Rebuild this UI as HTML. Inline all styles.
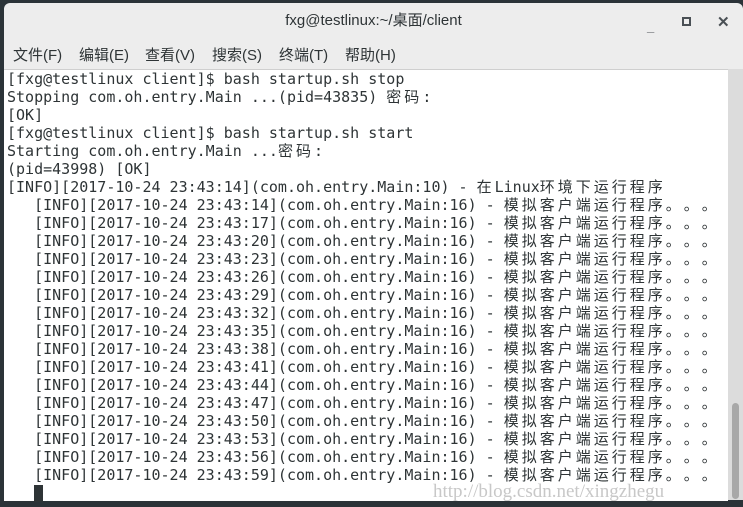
<!DOCTYPE html><html><head><meta charset="utf-8"><style>
body{margin:0;width:743px;height:507px;background:#2b3338;overflow:hidden;position:relative;font-family:"Liberation Sans","Noto Sans CJK SC",sans-serif}
.win{position:absolute;left:4px;top:3px;width:739px;height:497px;background:#ededed;border-radius:6px 6px 0 0}
.title{position:absolute;top:0;left:0;right:0;height:38px;text-align:center;line-height:36px;font-size:15px;color:#2e3436}
.menu{position:absolute;top:38px;left:9px;height:30px;line-height:30px;font-size:15px;color:#2e3436}
.menu span{display:inline-block;margin-right:0}
.term{position:absolute;left:0;top:66px;width:724px;height:431px;background:#fff;border-top:1px solid #cfcfcf}
.sb{position:absolute;left:724px;top:66px;width:15px;height:431px;background:#dcdcdc}
.thumb{position:absolute;left:728px;top:400px;width:7px;height:96px;background:#a8a8a8;border-radius:4px}
pre{margin:0;position:absolute;left:3px;top:0px;font-family:"DejaVu Sans Mono","Liberation Mono",monospace;font-size:15px;line-height:18px;color:#2e3436}
.c{font-family:"Noto Sans CJK SC",sans-serif;letter-spacing:3px}
.c b{display:inline-block;width:18px;font-weight:normal;letter-spacing:0}
.cur{display:inline-block;width:9px;height:17px;background:#2e3436;vertical-align:-4px}
.wm{position:absolute;left:429px;top:478px;font-family:"Liberation Serif",serif;font-size:19px;color:#c8c8c8}
.btn{position:absolute;top:13px;color:#4a5055;font-weight:bold;font-size:13px}
</style></head><body>
<div class="win">
<div class="title">fxg@testlinux:~/桌面/client</div>
<div class="btn" style="left:643px;top:16px">_</div>
<div style="position:absolute;left:678px;top:14px;width:5px;height:5px;border:2px solid #4a5055"></div>
<div class="btn" style="left:713px;top:10px;font-size:15px">✕</div>
<div class="menu"><span style="width:66px">文件(F)</span><span style="width:66px">编辑(E)</span><span style="width:67px">查看(V)</span><span style="width:67px">搜索(S)</span><span style="width:66px">终端(T)</span><span>帮助(H)</span></div>
<div class="term"><pre>[fxg@testlinux client]$ bash startup.sh stop
Stopping com.oh.entry.Main ...(pid=43835) <span class="c">密码</span>:
[OK]
[fxg@testlinux client]$ bash startup.sh start
Starting com.oh.entry.Main ...<span class="c">密码</span>:
(pid=43998) [OK]
[INFO][2017-10-24 23:43:14](com.oh.entry.Main:10) - <span class="c">在</span>Linux<span class="c">环境下运行程序</span>
   [INFO][2017-10-24 23:43:14](com.oh.entry.Main:16) - <span class="c">模拟客户端运行程序<b>。</b><b>。</b><b>。</b></span>
   [INFO][2017-10-24 23:43:17](com.oh.entry.Main:16) - <span class="c">模拟客户端运行程序<b>。</b><b>。</b><b>。</b></span>
   [INFO][2017-10-24 23:43:20](com.oh.entry.Main:16) - <span class="c">模拟客户端运行程序<b>。</b><b>。</b><b>。</b></span>
   [INFO][2017-10-24 23:43:23](com.oh.entry.Main:16) - <span class="c">模拟客户端运行程序<b>。</b><b>。</b><b>。</b></span>
   [INFO][2017-10-24 23:43:26](com.oh.entry.Main:16) - <span class="c">模拟客户端运行程序<b>。</b><b>。</b><b>。</b></span>
   [INFO][2017-10-24 23:43:29](com.oh.entry.Main:16) - <span class="c">模拟客户端运行程序<b>。</b><b>。</b><b>。</b></span>
   [INFO][2017-10-24 23:43:32](com.oh.entry.Main:16) - <span class="c">模拟客户端运行程序<b>。</b><b>。</b><b>。</b></span>
   [INFO][2017-10-24 23:43:35](com.oh.entry.Main:16) - <span class="c">模拟客户端运行程序<b>。</b><b>。</b><b>。</b></span>
   [INFO][2017-10-24 23:43:38](com.oh.entry.Main:16) - <span class="c">模拟客户端运行程序<b>。</b><b>。</b><b>。</b></span>
   [INFO][2017-10-24 23:43:41](com.oh.entry.Main:16) - <span class="c">模拟客户端运行程序<b>。</b><b>。</b><b>。</b></span>
   [INFO][2017-10-24 23:43:44](com.oh.entry.Main:16) - <span class="c">模拟客户端运行程序<b>。</b><b>。</b><b>。</b></span>
   [INFO][2017-10-24 23:43:47](com.oh.entry.Main:16) - <span class="c">模拟客户端运行程序<b>。</b><b>。</b><b>。</b></span>
   [INFO][2017-10-24 23:43:50](com.oh.entry.Main:16) - <span class="c">模拟客户端运行程序<b>。</b><b>。</b><b>。</b></span>
   [INFO][2017-10-24 23:43:53](com.oh.entry.Main:16) - <span class="c">模拟客户端运行程序<b>。</b><b>。</b><b>。</b></span>
   [INFO][2017-10-24 23:43:56](com.oh.entry.Main:16) - <span class="c">模拟客户端运行程序<b>。</b><b>。</b><b>。</b></span>
   [INFO][2017-10-24 23:43:59](com.oh.entry.Main:16) - <span class="c">模拟客户端运行程序<b>。</b><b>。</b><b>。</b></span>
   <span class="cur"></span></pre></div>
<div class="sb"></div><div class="thumb"></div>
<div class="wm">http://blog.csdn.net/xingzhegu</div>
</div>
</body></html>
